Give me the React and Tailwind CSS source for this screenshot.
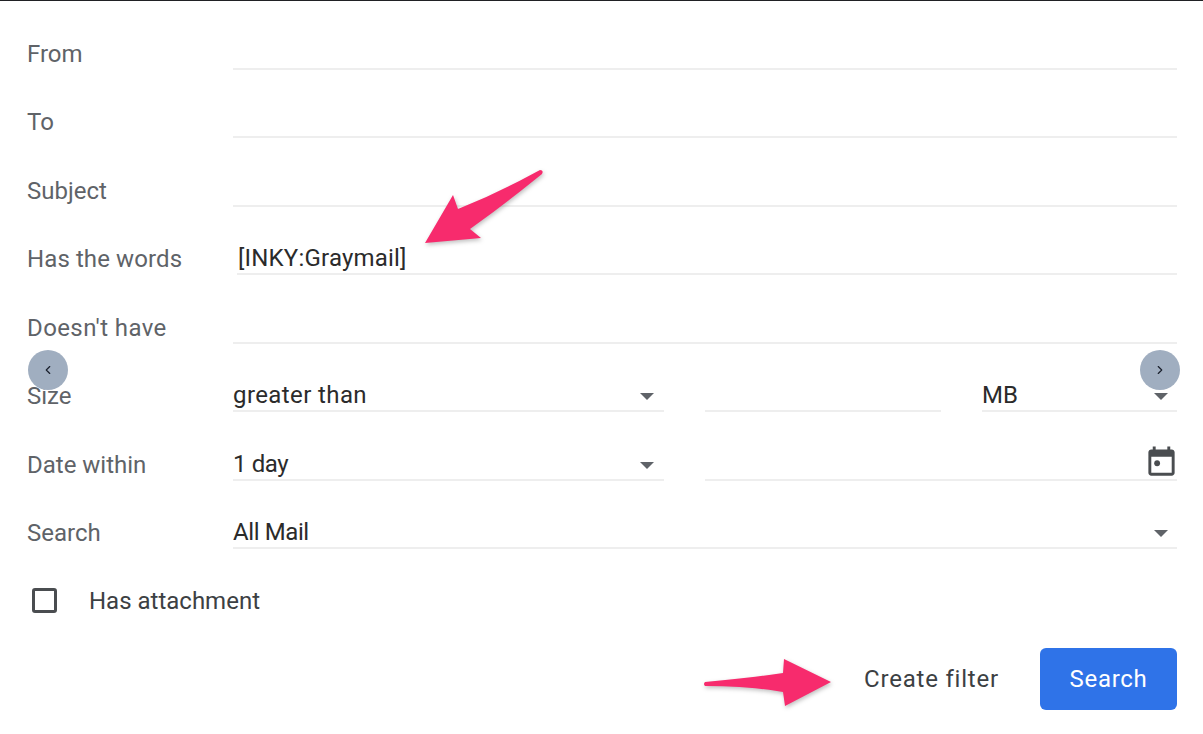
import React from 'react';
import { ChevronLeft, ChevronRight } from 'lucide-react';

const Caret = () => (
    <svg width="14" height="7" viewBox="0 0 14 7" className="shrink-0">
        <polygon points="0,0 14,0 7,7" fill="#5f6368" />
    </svg>
);

const CalendarIcon = () => (
    <svg width="35" height="35" viewBox="0 0 24 24" fill="#4a4d50" className="shrink-0">
        <path d="M19 3h-1V1h-2v2H8V1H6v2H5c-1.11 0-1.99.9-1.99 2L3 19c0 1.1.89 2 2 2h14c1.1 0 2-.9 2-2V5c0-1.1-.9-2-2-2zm0 16H5V8h14v11z" />
        <circle cx="9" cy="12.5" r="2" />
    </svg>
);

const Field = ({ children, className = '' }) => (
    <div className={`flex h-full items-end justify-between border-b-2 border-[#eeeeee] pb-[1px] text-[24px] leading-[27px] text-[#2b2b2b] ${className}`}>
        {children}
    </div>
);

const Row = ({ label, children }) => (
    <div className="flex h-[68.5px] pr-[26px]">
        <div className="flex w-[233px] shrink-0 items-end pb-[1px] pl-[27px] text-[24px] leading-[30px] text-[#5f6368]">
            {label}
        </div>
        <div className="flex min-w-0 flex-1 gap-[41px]">{children}</div>
    </div>
);

export default function App() {
    return (
        <div className="relative h-[734px] w-[1203px] overflow-hidden border-t border-[#202124] bg-white font-['Roboto',sans-serif]">
            <Row label="From"><Field className="flex-1" /></Row>
            <Row label="To"><Field className="flex-1" /></Row>
            <Row label="Subject"><Field className="flex-1" /></Row>
            <Row label={<span className="tracking-[0.1px]">Has the words</span>}>
                <Field className="ml-[4px] flex-1"><span className="pl-[1px] tracking-[0.2px]">[INKY:Graymail]</span></Field>
            </Row>
            <Row label={<span className="tracking-[0.4px]">Doesn't have</span>}><Field className="flex-1" /></Row>
            <Row label="Size">
                <Field className="w-[431px]">
                    <span className="tracking-[0.4px]">greater than</span>
                    <span className="mb-[9px] mr-[10px]"><Caret /></span>
                </Field>
                <Field className="w-[236px]" />
                <Field className="flex-1">
                    <span>MB</span>
                    <span className="mb-[9px] mr-[9px]"><Caret /></span>
                </Field>
            </Row>
            <Row label="Date within">
                <Field className="w-[431px]">
                    <span className="tracking-[-0.4px]">1 day</span>
                    <span className="mb-[9px] mr-[10px]"><Caret /></span>
                </Field>
                <Field className="flex-1 justify-end">
                    <span className="mb-[-2px] mr-[-2px]"><CalendarIcon /></span>
                </Field>
            </Row>
            <Row label="Search">
                <Field className="flex-1">
                    <span className="tracking-[-0.4px]">All Mail</span>
                    <span className="mb-[9px] mr-[9px]"><Caret /></span>
                </Field>
            </Row>

            <div className="mt-[35px] flex items-center pl-[32px]">
                <div className="mt-[-2px] h-[25px] w-[25px] rounded-[3px] border-[3px] border-[#4a4d50]" />
                <span className="ml-[32px] text-[24px] leading-[34px] text-[#3c4043]">Has attachment</span>
            </div>

            <div className="mt-[30px] flex items-center justify-end pr-[26px]">
                <span className="text-[24px] leading-[34px] tracking-[0.8px] text-[#3c4043]">Create filter</span>
                <button className="ml-[41px] h-[62px] w-[137px] rounded-[6px] bg-[#2f73e8] text-[24px] tracking-[0.7px] text-white">
                    Search
                </button>
            </div>

            {/* carousel buttons over the form */}
            <div className="absolute left-[28px] top-[349px] flex h-[40px] w-[40px] items-center justify-center rounded-full bg-[#a0aec0] text-[#1a202c]">
                <ChevronLeft size={14} />
            </div>
            <div className="absolute left-[1140px] top-[349px] flex h-[40px] w-[40px] items-center justify-center rounded-full bg-[#a0aec0] text-[#1a202c]">
                <ChevronRight size={14} />
            </div>

            {/* pink annotation arrows */}
            <svg className="absolute left-0 top-0 drop-shadow-[1px_2px_2px_rgba(0,0,0,0.25)]" width="1203" height="733" viewBox="0 1 1203 733" fill="#f72b6d">
                <path d="M425 243 L453 195 L458 209 Q500 192 540 170 Q544 170 542 174 Q505 204 470 229 L481 238 Z" />
                <path d="M705 682 Q703 684 705 686 Q750 686 783 692 L785 706 L831 682 L784 659 L783 673 Q750 678 705 682 Z" />
            </svg>
        </div>
    );
}
